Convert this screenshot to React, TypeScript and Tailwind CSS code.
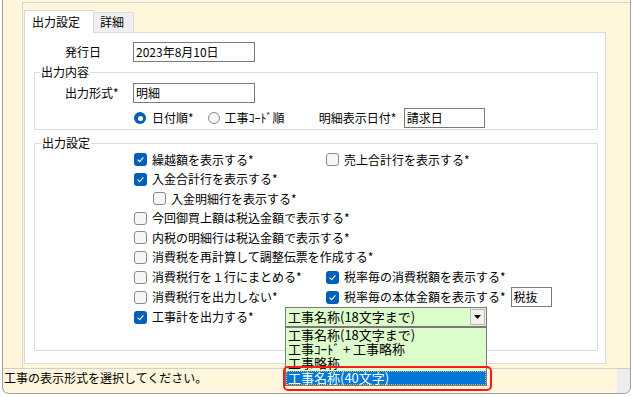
import React from "react";

const Check = ({ checked }: { checked?: boolean }) =>
  checked ? (
    <span className="w-[13px] h-[13px] shrink-0 rounded-[3px] bg-[#005fb8] flex items-center justify-center">
      <svg width="9" height="9" viewBox="0 0 9 9">
        <path d="M1.6 4.7 L3.6 6.6 L7.4 2.3" fill="none" stroke="white" strokeWidth="1.1" />
      </svg>
    </span>
  ) : (
    <span className="w-[13px] h-[13px] shrink-0 rounded-[3px] border border-[#8a8a8a] bg-[#f6f6f6]" />
  );

const Radio = ({ checked }: { checked?: boolean }) =>
  checked ? (
    <span className="w-[12px] h-[12px] shrink-0 rounded-full bg-[#005fb8] flex items-center justify-center">
      <span className="w-[5px] h-[5px] rounded-full bg-white" />
    </span>
  ) : (
    <span className="w-[12px] h-[12px] shrink-0 rounded-full border border-[#8a8a8a] bg-[#f6f6f6]" />
  );

const Item = ({ checked, label }: { checked?: boolean; label: string }) => (
  <div className="flex items-center gap-[5px] whitespace-nowrap">
    <Check checked={checked} />
    <span>{label}</span>
  </div>
);

const Field = ({ value, w }: { value: string; w: string }) => (
  <div className={`${w} h-[20px] border border-[#7a7a7a] bg-white px-[2px] flex items-center whitespace-nowrap`}>
    {value}
  </div>
);

const options = ["工事名称(18文字まで)", "工事ｺｰﾄﾞ + 工事略称", "工事略称"];

export default function App() {
  return (
    <div className="w-[632px] h-[397px] bg-white overflow-hidden font-['Noto_Sans_CJK_JP',sans-serif] text-[12px] leading-[14px] text-black">
      <div className="relative ml-[2px] w-[629px] h-[394px] bg-[#fff6dc] border-l border-r border-b border-[#a0a0a0] rounded-b-[7px] flex flex-col">
        <div className="flex-1 flex">
          <div className="w-[19px] shrink-0" />
          <div className="flex-1 mt-[2px] border-t border-l border-[#d4d4d4] pt-[7px] pr-[24px]">
            {/* tabs */}
            <div className="flex items-start h-[22px] ml-[1px]">
              <div className="relative z-10 w-[70px] h-[23px] bg-white border-t border-l border-r border-[#d9d9d9] pl-[7px] pt-[4px]">
                出力設定
              </div>
              <div className="mt-[2px] w-[40px] h-[20px] bg-[#f0f0f0] border-t border-r border-[#d9d9d9] pl-[6px] pt-[2px]">
                詳細
              </div>
            </div>

            <div className="ml-[1px] h-[332px] bg-white border border-[#d9d9d9]">
              {/* 発行日 */}
              <div className="mt-[9px] h-[20px] pl-[40px] flex items-center">
                <span className="w-[68px]">発行日</span>
                <Field value="2023年8月10日" w="w-[122px]" />
              </div>

              {/* 出力内容 */}
              <div className="mt-[10px] ml-[9px] w-[564px] border border-[#dcdcdc] pb-[1px]">
                <div className="-mt-[8px] ml-[5px] w-fit bg-white px-[1px] h-[14px]">出力内容</div>
                <div className="mt-[4px] h-[20px] pl-[30px] flex items-center">
                  <span className="w-[68px]">出力形式*</span>
                  <Field value="明細" w="w-[122px]" />
                </div>
                <div className="mt-[5px] h-[20px] pl-[99px] flex items-center">
                  <div className="flex items-center gap-[6px]">
                    <Radio checked />
                    <span>日付順*</span>
                  </div>
                  <div className="ml-[14px] flex items-center gap-[5px]">
                    <Radio />
                    <span>工事ｺｰﾄﾞ順</span>
                  </div>
                  <span className="ml-[34px] w-[85px]">明細表示日付*</span>
                  <Field value="請求日" w="w-[81px]" />
                </div>
              </div>

              {/* 出力設定 */}
              <div className="mt-[13px] ml-[9px] w-[564px] border border-[#dcdcdc] pb-[23px]">
                <div className="-mt-[8px] ml-[6px] w-fit bg-white px-[1px] h-[14px]">出力設定</div>
                <div className="h-[19px] pl-[99px] flex items-center">
                  <div className="w-[192px]">
                    <Item checked label="繰越額を表示する*" />
                  </div>
                  <Item label="売上合計行を表示する*" />
                </div>
                <div className="h-[20px] pl-[99px] flex items-center">
                  <Item checked label="入金合計行を表示する*" />
                </div>
                <div className="h-[19px] pl-[118px] flex items-center">
                  <Item label="入金明細行を表示する*" />
                </div>
                <div className="h-[20px] pl-[99px] flex items-center">
                  <Item label="今回御買上額は税込金額で表示する*" />
                </div>
                <div className="h-[19px] pl-[99px] flex items-center">
                  <Item label="内税の明細行は税込金額で表示する*" />
                </div>
                <div className="h-[20px] pl-[99px] flex items-center">
                  <Item label="消費税を再計算して調整伝票を作成する*" />
                </div>
                <div className="h-[20px] pl-[99px] flex items-center">
                  <div className="w-[192px]">
                    <Item label="消費税行を１行にまとめる*" />
                  </div>
                  <Item checked label="税率毎の消費税額を表示する*" />
                </div>
                <div className="h-[20px] pl-[99px] flex items-center">
                  <div className="w-[192px]">
                    <Item label="消費税行を出力しない*" />
                  </div>
                  <Item checked label="税率毎の本体金額を表示する*" />
                  <div className="ml-[5px]">
                    <Field value="税抜" w="w-[41px]" />
                  </div>
                </div>
                <div className="h-[20px] pl-[99px] flex items-center">
                  <div className="w-[151px]">
                    <Item checked label="工事計を出力する*" />
                  </div>
                  {/* combobox */}
                  <div className="relative z-20 w-[202px] h-[20px] border border-[#7a7a7a] bg-[#ddfccb] text-[13px] flex items-center">
                    <span className="flex-1 pl-[2px] whitespace-nowrap">工事名称(18文字まで)</span>
                    <span className="w-[15px] h-[16px] mr-[1px] bg-[#f2f2f2] border border-[#b8b8b8] flex items-center justify-center">
                      <svg width="7" height="4" viewBox="0 0 7 4">
                        <path d="M0 0 H7 L3.5 4 Z" fill="black" />
                      </svg>
                    </span>
                    {/* open list */}
                    <div className="absolute -left-[1px] top-[19px] w-[202px] border border-[#7a7a7a] bg-[#ddfccb]">
                      {options.map((o, i) => (
                        <div
                          key={o}
                          className={`${i === 2 ? "h-[15px]" : "h-[14px]"} px-[2px] leading-[14px] overflow-hidden whitespace-nowrap`}
                        >
                          {o}
                        </div>
                      ))}
                      <div className="h-[14px] px-[1px] leading-[12px] bg-[#0078d7] text-white border border-dotted border-[#e8b060] whitespace-nowrap">
                        工事名称(40文字)
                      </div>
                      <div className="absolute -left-[3px] top-[38px] w-[209px] h-[25px] border-2 border-[#ff1a1a] rounded-[5px]" />
                    </div>
                  </div>
                </div>
              </div>
            </div>
          </div>
        </div>

        {/* status bar */}
        <div className="h-[25px] border-t border-[#d0d0d0] flex">
          <div className="flex-1 pl-[1px] pt-[2px] whitespace-nowrap">工事の表示形式を選択してください。</div>
          <div className="w-[13px] bg-[#ececec] rounded-br-[6px]" />
        </div>
      </div>
    </div>
  );
}
